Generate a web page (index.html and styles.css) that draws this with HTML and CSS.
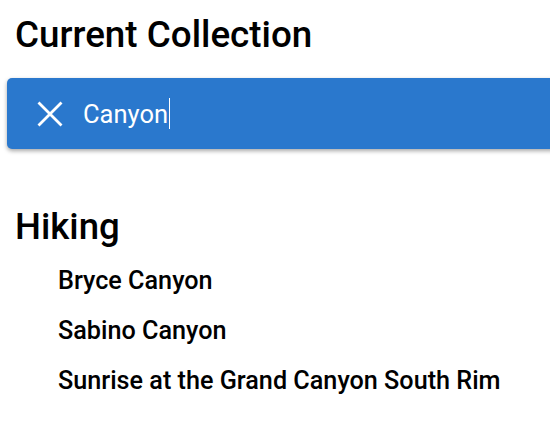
FILE: index.html
```html
<!DOCTYPE html>
<html>
<head>
<meta charset="utf-8">
<link rel="stylesheet" href="styles.css">
</head>
<body>
<div class="page">
  <h1 class="title">Current Collection</h1>
  <div class="searchbar">
    <svg class="close" viewBox="0 0 26 26" width="26" height="26"><path d="M1.5 1.5L24.5 24.5M24.5 1.5L1.5 24.5" stroke="#fff" stroke-width="2.8" fill="none"/></svg>
    <span class="query">Canyon</span><span class="caret"></span>
  </div>
  <section class="group">
    <h2 class="group-title">Hiking</h2>
    <ul class="items">
      <li>Bryce Canyon</li>
      <li>Sabino Canyon</li>
      <li>Sunrise at the Grand Canyon South Rim</li>
    </ul>
  </section>
</div>
</body>
</html>
```
FILE: styles.css
```css
html, body { margin: 0; padding: 0; background: #fff; }
body { font-family: Roboto, "Noto Sans", sans-serif; color: #000; overflow: hidden; }
.page { padding: 13px 0 0 0; }
.title { margin: 0 0 0 15px; font-size: 36.8px; font-weight: 500; line-height: 44px; }
.searchbar {
  margin: 21px -20px 0 7px;
  height: 71px;
  background: #2a78cd;
  border-radius: 5px;
  box-shadow: 0 2px 4px rgba(0,0,0,0.35);
  display: flex; align-items: center;
  padding-left: 30px;
  color: #fff;
}
.close { flex: none; }
.query { margin-left: 20px; font-size: 25.5px; line-height: 30px; }
.caret { width: 1px; height: 31px; background: #fff; margin-left: 1px; }
.group { margin-top: 56px; }
.group-title { margin: 0 0 0 15px; font-size: 36.6px; font-weight: 500; line-height: 44px; }
.items { list-style: none; margin: 7px 0 0 0; padding: 0 0 0 58px; }
.items li { font-size: 25.2px; font-weight: 500; line-height: 50px; }
```
